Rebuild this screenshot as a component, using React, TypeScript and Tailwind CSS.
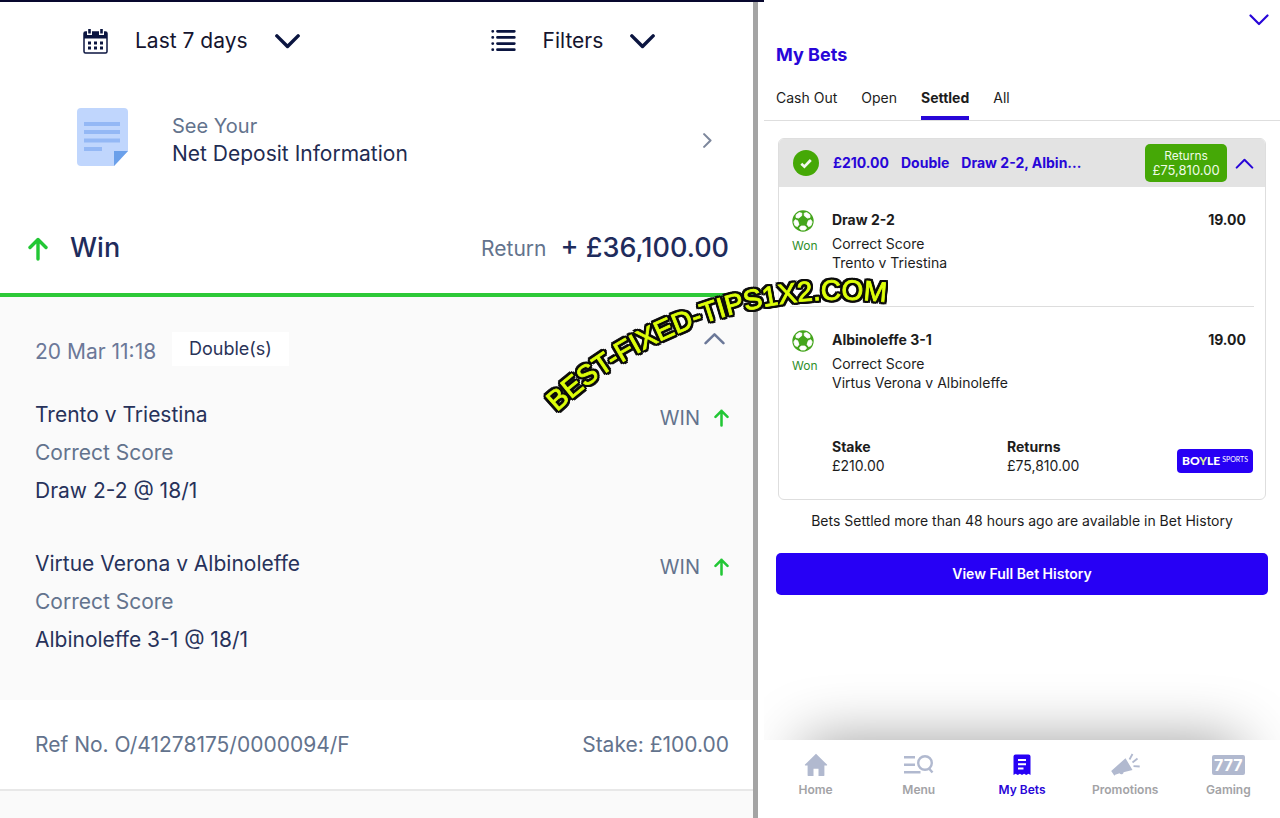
import type { ReactNode } from "react";

import clsx from "clsx";

interface Selection {
  event: string;
  market: string;
  pick: string;
}

interface Leg {
  title: string;
  market: string;
  event: string;
  odds: string;
}

const selections: Selection[] = [
  {
    event: "Trento v Triestina",
    market: "Correct Score",
    pick: "Draw 2-2 @ 18/1",
  },
  {
    event: "Virtue Verona v Albinoleffe",
    market: "Correct Score",
    pick: "Albinoleffe 3-1 @ 18/1",
  },
];

const legs: Leg[] = [
  {
    title: "Draw 2-2",
    market: "Correct Score",
    event: "Trento v Triestina",
    odds: "19.00",
  },
  {
    title: "Albinoleffe 3-1",
    market: "Correct Score",
    event: "Virtus Verona v Albinoleffe",
    odds: "19.00",
  },
];

const tabs = ["Cash Out", "Open", "Settled", "All"];

interface ChevronProps {
  className?: string;
  up?: boolean;
  strokeWidth?: number;
}

function Chevron({ className, up, strokeWidth = 2 }: ChevronProps) {
  return (
    <svg
      viewBox="0 0 20 12"
      className={clsx("shrink-0", className)}
      fill="none"
      stroke="currentColor"
      strokeWidth={strokeWidth}
      strokeLinecap="round"
      strokeLinejoin="round"
      aria-hidden="true"
    >
      <path d={up ? "M1.5 10.5 10 2l8.5 8.5" : "M1.5 1.5 10 10l8.5-8.5"} />
    </svg>
  );
}

function ArrowUp({ className }: { className?: string }) {
  return (
    <svg
      viewBox="0 0 20 24"
      className={clsx("shrink-0 text-[#22c735]", className)}
      fill="none"
      stroke="currentColor"
      strokeWidth="3.4"
      strokeLinecap="round"
      strokeLinejoin="round"
      aria-hidden="true"
    >
      <path d="M10 22V2.5M2 10.5l8-8 8 8" />
    </svg>
  );
}

function CalendarIcon() {
  return (
    <svg viewBox="0 0 25 25" className="size-[25px]" aria-hidden="true">
      <rect
        x="1"
        y="3"
        width="23"
        height="21"
        rx="1.5"
        fill="none"
        stroke="#0b1540"
        strokeWidth="1.5"
      />
      <path d="M1 3h23v6.5H1z" fill="#0b1540" />
      <path d="M4 0h5v6H4zM16 0h5v6h-5z" fill="#fff" />
      <path d="M5.2 0h2.6v4.5H5.2zM17.2 0h2.6v4.5h-2.6z" fill="#0b1540" />
      <path
        d="M5 12.5h3v3H5zM11 12.5h3v3h-3zM17 12.5h3v3h-3zM5 17.5h3v3H5zM11 17.5h3v3h-3zM17 17.5h3v3h-3z"
        fill="#0b1540"
      />
    </svg>
  );
}

function ListIcon() {
  return (
    <svg
      viewBox="0 0 25 25"
      className="size-[25px]"
      stroke="#0b1540"
      strokeWidth="2.8"
      strokeLinecap="round"
      aria-hidden="true"
    >
      <path d="M6.5 2.3h16.8M6.5 8.4h16.8M6.5 14.6h16.8M6.5 20.7h16.8M1.7 2.3h.1M1.7 8.4h.1M1.7 14.6h.1M1.7 20.7h.1" />
    </svg>
  );
}

function NoteIcon() {
  return (
    <svg
      viewBox="0 0 51 58"
      className="mt-7 h-[58px] w-[51px] self-start"
      aria-hidden="true"
    >
      <path
        d="M4 0h43a4 4 0 0 1 4 4v39L37 58H4a4 4 0 0 1-4-4V4a4 4 0 0 1 4-4z"
        fill="#c0d6fd"
      />
      <path d="M37 43h14L37 58z" fill="#6ba0ea" />
      <path
        d="M7 14h36v4H7zM7 22h36v4H7zM7 30.5h36v4H7zM7 39h18v4H7z"
        fill="#94b8f5"
      />
    </svg>
  );
}

function BallIcon() {
  return (
    <svg viewBox="-11 -11 22 22" className="size-[22px]" aria-hidden="true">
      <circle r="10.7" fill="#44a51c" />
      {[18, 90, 162, 234, 306].map((angle) => (
        <path
          key={angle}
          transform={`rotate(${angle})`}
          d="M5-1.9 7-3.6 9-1.9V1.9L7 3.6 5 1.9z"
          fill="#fff"
          stroke="#fff"
          strokeWidth="0.8"
          strokeLinejoin="round"
        />
      ))}
    </svg>
  );
}

function CheckIcon() {
  return (
    <svg viewBox="0 0 26 26" className="size-[26px] shrink-0" aria-hidden="true">
      <circle cx="13" cy="13" r="13" fill="#45a806" />
      <path
        d="M8.3 13.8 11.4 16.7 17.8 10"
        fill="none"
        stroke="#f2f8ee"
        strokeWidth="2.7"
      />
    </svg>
  );
}

function HomeIcon() {
  return (
    <svg viewBox="0 0 24 24" className="size-6" fill="currentColor">
      <path d="M12 .8 1 11.6c-.4.5 0 1 .6 1h2v9.3c0 .8.4 1.2 1.2 1.2h4.7v-7.3h5v7.3h4.7c.8 0 1.2-.4 1.2-1.2v-9.3h2c.6 0 1-.5.6-1z" />
    </svg>
  );
}

function MenuIcon() {
  return (
    <svg
      viewBox="0 0 30 24"
      className="h-6 w-[30px]"
      fill="none"
      stroke="currentColor"
      strokeWidth="2.4"
    >
      <path d="M0 4.2h11M0 11.7h11M0 19.2h16.5" />
      <circle cx="21" cy="10" r="6.8" />
      <path d="m25 15.5 3.5 4" />
    </svg>
  );
}

function ReceiptIcon() {
  return (
    <svg viewBox="0 0 24 24" className="size-6">
      <path
        d="M5.5 1.5h13a2 2 0 0 1 2 2V22l-2-1.3L16.2 22l-2.1-1.3L12 22l-2.1-1.3L7.8 22l-2.2-1.3L3.5 22V3.500a2 2 0 0 1 2-2z"
        fill="currentColor"
      />
      <path
        d="M8 7h8M8 11.3h8M8 15.5h5.5"
        stroke="#fff"
        strokeWidth="2"
        fill="none"
      />
    </svg>
  );
}

function MegaphoneIcon() {
  return (
    <svg viewBox="0 0 30 24" className="h-6 w-[30px]" fill="currentColor">
      <path d="M15.5 5.2 22.5 17 13.5 19.2c.3 1.6-2.6 3-4 1.1l-4.3 1.5-.8 1L1.2 18z" />
      <path
        d="m19.5 6.5 3-5.5M22.5 9.500l5-4M23.5 13.2l6.2.3"
        fill="none"
        stroke="currentColor"
        strokeWidth="1.8"
      />
    </svg>
  );
}

function SlotsIcon() {
  return (
    <span className="flex h-5 w-[33px] items-center justify-center rounded-xs bg-[#b1b9cf] text-base leading-5 font-bold text-white">
      777
    </span>
  );
}

function AccountHistory() {
  return (
    <section className="flex min-w-0 flex-col border-t-2 border-[#08082e] bg-white">
      <div className="grid h-[78px] grid-cols-2 text-[21px] text-[#15152f]">
        <button className="flex items-center gap-[27px] pl-[83px] whitespace-nowrap">
          <CalendarIcon />
          Last 7 days
          <Chevron
            className="h-[15px] w-[25px] text-[#0b1540]"
            strokeWidth={2.8}
          />
        </button>
        <button className="flex items-center gap-[27px] pl-[114px] whitespace-nowrap">
          <ListIcon />
          Filters
          <Chevron
            className="h-[15px] w-[25px] text-[#0b1540]"
            strokeWidth={2.8}
          />
        </button>
      </div>

      <a
        href="#net-deposit"
        className="flex h-[120px] items-center pr-[38px] pl-[77px] text-[21px] leading-[27px]"
      >
        <NoteIcon />
        <span className="ml-11 flex flex-1 flex-col">
          <span className="text-xl leading-[27px] text-[#63738d]">
            See Your
          </span>
          <span className="text-[#1f2c52]">Net Deposit Information</span>
        </span>
        <Chevron
          className="h-[9px] w-[15px] -rotate-90 text-[#7d879c]"
          strokeWidth={2.8}
        />
      </a>

      <div className="flex h-[97px] items-center border-b-4 border-[#2dc937] pt-1 pr-6 pl-7 text-[27px] font-medium text-[#1f2c5c]">
        <ArrowUp className="h-6 w-5" />
        <h2 className="ml-[22px] flex-1">Win</h2>
        <span className="text-[21px] font-normal text-[#63738d]">Return</span>
        <span className="ml-3.5">+ £36,100.00</span>
      </div>

      <div className="h-[403px] bg-[#fafafa] pt-[35px] pr-6 pl-[35px] text-[21px]">
        <div className="flex items-start">
          <time className="w-[137px] pt-1 whitespace-nowrap text-[#6b7898]">
            20 Mar 11:18
          </time>
          <span className="flex h-[34px] items-center bg-white px-[17px] text-lg text-[#2a3358]">
            Double(s)
          </span>
          <button className="ml-auto pr-1" aria-label="Collapse bet">
            <Chevron
              up
              className="h-[13px] w-[21px] text-[#6b7898]"
              strokeWidth={2.4}
            />
          </button>
        </div>
        <ul className="flex flex-col gap-[35px] pt-7 leading-[38px] text-[#27325a]">
          {selections.map((selection) => (
            <li key={selection.event} className="flex justify-between">
              <div>
                <p>{selection.event}</p>
                <p className="text-[#63738d]">{selection.market}</p>
                <p>{selection.pick}</p>
              </div>
              <span className="flex h-11 items-center gap-3.5 text-xl text-[#63738d]">
                WIN
                <ArrowUp className="h-[18px] w-[15px]" />
              </span>
            </li>
          ))}
        </ul>
      </div>

      <div className="flex h-[91px] items-center justify-between border-b-2 border-[#e8e8e8] pr-6 pl-[35px] text-[21px] text-[#63738d]">
        <span>Ref No. O/41278175/0000094/F</span>
        <span>Stake: £100.00</span>
      </div>
      <div className="flex-1 bg-[#fafafa]" />
    </section>
  );
}

function BetLeg({ leg }: { leg: Leg }) {
  return (
    <li className="mx-[11px] flex h-[120px] pt-[23px] pr-2 pl-[2px] leading-[19px] not-last:border-b not-last:border-[#dddddd]">
      <div className="w-10">
        <BallIcon />
        <p className="mt-1 text-xs leading-[19px] text-[#2f8f2a]">Won</p>
      </div>
      <div className="flex-1">
        <h3 className="mb-[5px] font-bold">{leg.title}</h3>
        <p>{leg.market}</p>
        <p>{leg.event}</p>
      </div>
      <span className="font-bold">{leg.odds}</span>
    </li>
  );
}

function NavItem({
  label,
  active,
  children,
}: {
  label: string;
  active?: boolean;
  children: ReactNode;
}) {
  return (
    <a
      href={`#${label}`}
      className={clsx(
        "flex flex-col items-center gap-1 pt-[13px] text-xs leading-[18px] font-semibold whitespace-nowrap",
        active ? "text-[#2806d8]" : "text-[#a3a3a6]",
      )}
    >
      <span
        className={clsx(
          "flex h-6 items-center",
          active ? "text-[#2700f5]" : "text-[#b1b9cf]",
        )}
      >
        {children}
      </span>
      {label}
    </a>
  );
}

function MyBets() {
  return (
    <section className="flex min-w-0 flex-col overflow-hidden bg-white text-sm text-[#1c1c1c]">
      <div className="flex h-[39px] items-center justify-end pr-[11px]">
        <button aria-label="Close">
          <Chevron
            className="h-3 w-5 text-[#2806d8]"
            strokeWidth={2.2}
          />
        </button>
      </div>
      <h1 className="pl-3 text-lg leading-8 font-bold text-[#2806d8]">
        My Bets
      </h1>
      <div
        role="tablist"
        className="flex h-[50px] gap-6 border-b border-[#dedede] pl-3"
      >
        {tabs.map((tab) => (
          <button
            key={tab}
            role="tab"
            aria-selected={tab === "Settled"}
            className={clsx(
              "flex h-[49px] items-center border-b-4 pt-2.5 pb-[2px]",
              tab === "Settled"
                ? "border-[#2806d8] font-bold"
                : "border-transparent",
            )}
          >
            {tab}
          </button>
        ))}
      </div>

      <article className="mx-3.5 mt-[17px] overflow-hidden rounded-md border border-[#dedede]">
        <header className="flex h-12 items-center bg-[#e3e3e3] pr-[11px] pl-3.5 font-bold text-[#2806d8]">
          <CheckIcon />
          <span className="ml-3.5">£210.00</span>
          <span className="ml-3">Double</span>
          <span className="ml-3 min-w-0 flex-1 truncate">
            Draw 2-2, Albin...
          </span>
          <span className="flex h-[38px] w-[82px] flex-col justify-center rounded-[5px] bg-[#45a806] text-center text-[13px] leading-[15px] font-normal text-[#effbe6]">
            <span className="text-xs leading-[15px]">Returns</span>
            £75,810.00
          </span>
          <button className="ml-2" aria-label="Collapse">
            <Chevron up className="h-[11px] w-[19px]" strokeWidth={2.2} />
          </button>
        </header>
        <ul>
          {legs.map((leg) => (
            <BetLeg key={leg.title} leg={leg} />
          ))}
        </ul>
        <div className="flex h-[72px] items-start pt-2.5 pr-3 pl-[53px] leading-[19px]">
          <dl className="flex flex-1">
            <div className="w-[175px]">
              <dt className="font-bold">Stake</dt>
              <dd>£210.00</dd>
            </div>
            <div>
              <dt className="font-bold">Returns</dt>
              <dd>£75,810.00</dd>
            </div>
          </dl>
          <span className="mt-3 flex h-6 w-[76px] items-start justify-center gap-0.5 rounded bg-[#2700f5] pt-1 font-['Lato',sans-serif] text-white">
            <span className="text-xs leading-4 font-black">
              BO<span className="text-[#dcee9a]">Y</span>LE
            </span>
            <span className="text-[7px] leading-3">SPORTS</span>
          </span>
        </div>
      </article>

      <p className="mt-[11px] text-center leading-[19px]">
        Bets Settled more than 48 hours ago are available in Bet History
      </p>
      <button className="mx-3 mt-[23px] h-[42px] rounded-[5px] bg-[#2700f5] font-semibold text-white">
        View Full Bet History
      </button>

      <div className="relative isolate mt-auto">
        <div className="absolute inset-x-10 top-0 -z-10 h-40 shadow-[0_0_60px_rgba(0,0,0,0.38)]" />
        <nav className="grid h-[78px] grid-cols-5 bg-white">
          <NavItem label="Home">
            <HomeIcon />
          </NavItem>
          <NavItem label="Menu">
            <MenuIcon />
          </NavItem>
          <NavItem label="My Bets" active>
            <ReceiptIcon />
          </NavItem>
          <NavItem label="Promotions">
            <MegaphoneIcon />
          </NavItem>
          <NavItem label="Gaming">
            <SlotsIcon />
          </NavItem>
        </nav>
      </div>
    </section>
  );
}

function Watermark() {
  return (
    <svg
      viewBox="0 0 380 160"
      className="pointer-events-none absolute top-[265px] left-[535px] h-40 w-[380px] [filter:drop-shadow(2px_0_0_#0a0a0a)_drop-shadow(-2px_0_0_#0a0a0a)_drop-shadow(0_2px_0_#0a0a0a)_drop-shadow(0_-2px_0_#0a0a0a)]"
    >
      <path
        id="watermark-arc"
        d="M22 147C102 72 222 23 349 37L376 41"
        fill="none"
      />
      <text
        className="font-['Liberation_Sans',Arial,sans-serif] text-[28px]"
        fill="#ddff0a"
        stroke="#ddff0a"
        strokeWidth="0.8"
      >
        <textPath href="#watermark-arc">BEST-FIXED-TIPS1X2.COM</textPath>
      </text>
    </svg>
  );
}

export default function App() {
  return (
    <main className="relative grid min-h-screen grid-cols-[753fr_5px_6px_516fr] bg-white font-['Inter',sans-serif]">
      <AccountHistory />
      <div className="border-t-2 border-[#08082e] bg-[#a4a4a4]" />
      <div className="border-t-2 border-[#08082e]" />
      <MyBets />
      <Watermark />
    </main>
  );
}
